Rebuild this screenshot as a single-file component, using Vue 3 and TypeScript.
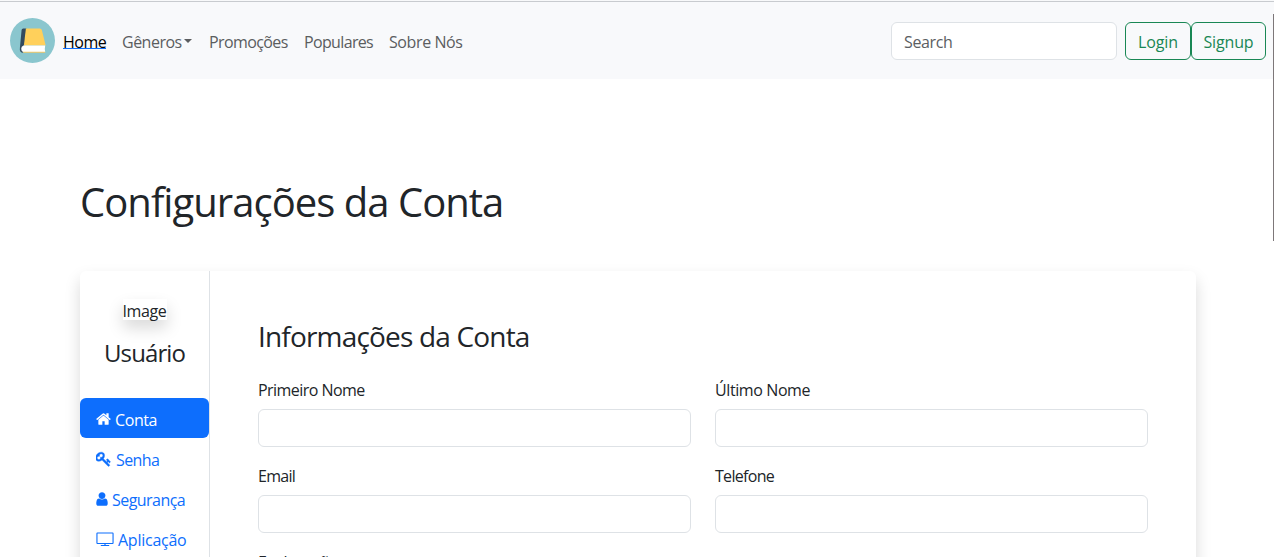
<script setup lang="ts">
interface Field { id: string; label: string; cls: string }

const links = [
  { text: 'Gêneros', cls: 'l-gen', caret: true },
  { text: 'Promoções', cls: 'l-pro', caret: false },
  { text: 'Populares', cls: 'l-pop', caret: false },
  { text: 'Sobre Nós', cls: 'l-sob', caret: false },
]

const fields: Field[] = [
  { id: 'first', label: 'Primeiro Nome', cls: 'f-first' },
  { id: 'last', label: 'Último Nome', cls: 'f-last' },
  { id: 'email', label: 'Email', cls: 'f-email' },
  { id: 'phone', label: 'Telefone', cls: 'f-phone' },
]
</script>

<template>
  <div class="page">
    <nav class="navbar">
      <svg class="logo" viewBox="0 0 45 45">
        <circle cx="22.500" cy="22.500" r="22.500" fill="#8ac6ce" />
        <path d="M13.200 10.500h3.300l-2 17-1.300.5v6.700q-4 0-3.300-5L11.600 12q.2-1.400 1.600-1.500z" fill="#324a5e" />
        <path d="M15.900 10.500h14q1.500 0 1.900 1.500L35.700 27.600H13.900z" fill="#ffd05b" />
        <path d="M13.500 27.400h21.700q-.8 3.300 0 6.600H13.200q-2-.8-2-3.300t2.300-3.300z" fill="#fff" />
        <path d="M12.500 33.700h22.700v1H13.500z" fill="#f4c866" />
      </svg>
      <a class="link home"><span>Home</span></a>
      <a v-for="l in links" :key="l.text" class="link" :class="l.cls">
        <span>{{ l.text }}</span><i v-if="l.caret" class="caret"></i>
      </a>
      <div class="actions">
        <input class="control search" type="search" placeholder="Search" />
        <button class="btn login">Login</button>
        <button class="btn signup">Signup</button>
      </div>
    </nav>
    <main>
      <h1>Configurações da Conta</h1>
      <div class="card">
        <aside>
          <div class="avatar">Image</div>
          <h4>Usuário</h4>
          <a class="tab active t-conta">
            <svg width="15" height="16" viewBox="64 0 1664 1792"><path d="M1472 992v480q0 26-19 45t-45 19h-384v-384h-256v384h-384q-26 0-45-19t-19-45v-480q0-1 .5-3t.5-3l575-474 575 474q1 2 1 6zm223-69l-62 74q-8 9-21 11h-3q-13 0-21-7l-692-577-692 577q-12 8-24 7-13-2-21-11l-62-74q-8-10-7-23.5t11-21.5l719-599q32-26 76-26t76 26l244 204v-195q0-14 9-23t23-9h192q14 0 23 9t9 23v408l219 182q10 8 11 21.5t-7 23.5z" /></svg>
            <span>Conta</span>
          </a>
          <a class="tab t-senha">
            <svg width="16" height="16" viewBox="64 0 1792 1792"><path d="M832 512q0-80-56-136t-136-56-136 56-56 136q0 42 19 83-41-19-83-19-80 0-136 56t-56 136 56 136 136 56 136-56 56-136q0-42-19-83 41 19 83 19 80 0 136-56t56-136zm851 704q0 17-49 66t-66 49q-9 0-28.5-16t-36.5-33-38.5-40-24.5-26l-96 96 220 220q28 28 28 68 0 42-39 81t-81 39q-40 0-68-28l-671-671q-176 131-365 131-163 0-265.5-102.5t-102.5-265.5q0-160 95-313t248-248 313-95q163 0 265.5 102.5t102.5 265.5q0 189-131 365l355 355 96-96q-3-3-26-24.5t-40-38.5-33-36.5-16-28.5q0-17 49-66t66-49q13 0 23 10 6 6 46 44.5t82 79.5 86.500 86 73 78 28.500 41z" /></svg>
            <span>Senha</span>
          </a>
          <a class="tab t-seg">
            <svg width="12" height="16" viewBox="224 0 1344 1792"><path d="M1536 1399q0 109-62.5 187t-150.500 78h-854q-88 0-150.500-78t-62.500-187q0-85 8.500-160.500t31.500-152 58.500-131 94-89 134.500-34.500q131 128 313 128t313-128q76 0 134.500 34.500t94 89 58.500 131 31.500 152 8.500 160.500zm-256-887q0 159-112.500 271.500t-271.500 112.500-271.500-112.500-112.500-271.500 112.500-271.500 271.500-112.500 271.500 112.500 112.500 271.500z" /></svg>
            <span>Segurança</span>
          </a>
          <a class="tab t-apl">
            <svg width="18" height="16" viewBox="0 0 18 16"><path fill-rule="evenodd" d="M1.400 1.500h15.200q1 0 1 1v9.400q0 1-1 1H9.600v1.200h3.600v1H4.800v-1h3.600v-1.200h-7q-1 0-1-1V2.500q0-1 1-1zm.1 1v9.400h15V2.500z" /></svg>
            <span>Aplicação</span>
          </a>
        </aside>
        <section>
          <h3>Informações da Conta</h3>
          <div class="grid">
            <div v-for="f in fields" :key="f.id">
              <label :for="f.id" :class="f.cls">{{ f.label }}</label>
              <input :id="f.id" class="control" type="text" />
            </div>
            <div><label class="f-exp">Explanação</label></div>
          </div>
        </section>
      </div>
    </main>
    <div class="scrollmark"></div>
  </div>
</template>

<style>
html, body { margin: 0; overflow: hidden; }
</style>

<style scoped>
.page { position: relative; height: 557px; overflow: hidden; background: #fff; color: #212529; font: 16px/24px "Open Sans", "Noto Sans", sans-serif; letter-spacing: -.4px; }
.page * { box-sizing: border-box; }
.navbar { display: flex; align-items: center; height: 79px; padding: 3px 8px 0 10px; background: linear-gradient(#f8f9fa 0 1px, #c8cbcf 1px 2px, #f8f9fb 2px); }
.logo { width: 45px; height: 45px; margin: -2px 8px 0 0; }
.link { display: flex; align-items: center; padding-top: 2px; color: #5b5d5f; white-space: nowrap; margin-right: 16px; }
.home { color: #000; width: 43px; letter-spacing: -.5px; }
.home span { width: 43px; background: linear-gradient(#0d6efd, #0d6efd) 0 18px / 100% 1px no-repeat; }
.l-gen { width: 71px; letter-spacing: -.5px; }
.l-pro { width: 79px; letter-spacing: -.6px; }
.l-pop { width: 69px; letter-spacing: -.65px; }
.l-sob { width: 74px; letter-spacing: -.4px; }
.caret { border: 4.800px solid transparent; border-top-color: currentColor; border-bottom: 0; margin: -2px 1px 0 auto; }
.actions { display: flex; margin-left: auto; }
.control { display: block; width: 100%; height: 38px; border: 1px solid #dee2e6; border-radius: 6px; background: #fff; padding: 7px 12px 5px; font: inherit; letter-spacing: -.35px; outline: none; }
.control::placeholder { color: #5b5e62; opacity: 1; }
.search { width: 226px; margin-right: 8px; }
.btn { height: 38px; padding: 2px 0 0; border: 1px solid #198754; border-radius: 6px; color: #198754; background: transparent; font: inherit; letter-spacing: -.15px; }
.login { width: 66px; }
.signup { width: 75px; }
main { padding: 99px 78px 0 80px; }
h1, h3, h4 { margin: 0; font-weight: 400; white-space: nowrap; }
h1 { font-size: 40px; line-height: 48px; letter-spacing: -.97px; }
.card { display: flex; width: 1116px; height: 600px; margin-top: 45px; border-radius: 6px; box-shadow: 0 8px 16px rgba(0, 0, 0, .15); }
aside { width: 130px; border-right: 1px solid #dee2e6; padding-top: 28px; }
.avatar { width: 44px; height: 21px; margin: 0 auto; line-height: 25px; box-shadow: 0 8px 16px rgba(0, 0, 0, .15); }
h4 { font-size: 24px; line-height: 28px; margin: 19px 0 31px; text-align: center; letter-spacing: -.9px; }
.tab { display: flex; align-items: center; height: 40px; padding: 2px 16px 0; border-radius: 6px; color: #0d6efd; white-space: nowrap; }
.tab span { padding-top: 1px; }
.tab svg { fill: currentColor; flex: none; margin-right: 4px; }
.t-senha path { stroke: currentColor; stroke-width: 45px; }
.active { color: #fff; background: #0d6efd; }
.t-senha { letter-spacing: -.6px; }
.t-seg { letter-spacing: -.55px; }
.t-apl { letter-spacing: -.25px; }
section { flex: 1; padding: 48px 48px 0; }
h3 { font-size: 28px; line-height: 34px; margin-bottom: 24px; letter-spacing: -.82px; }
.grid { display: grid; grid-template-columns: 433px 433px; column-gap: 24px; row-gap: 16px; }
label { display: block; height: 24px; line-height: 26px; margin-bottom: 8px; white-space: nowrap; }
.f-first { letter-spacing: -.55px; }
.f-last { letter-spacing: -.4px; }
.f-email { letter-spacing: -.7px; }
.f-phone { letter-spacing: -.7px; }
.f-exp { letter-spacing: -.5px; }
.scrollmark { position: absolute; left: 1273px; top: 14px; width: 1px; height: 227px; background: #7d7779; }
</style>
